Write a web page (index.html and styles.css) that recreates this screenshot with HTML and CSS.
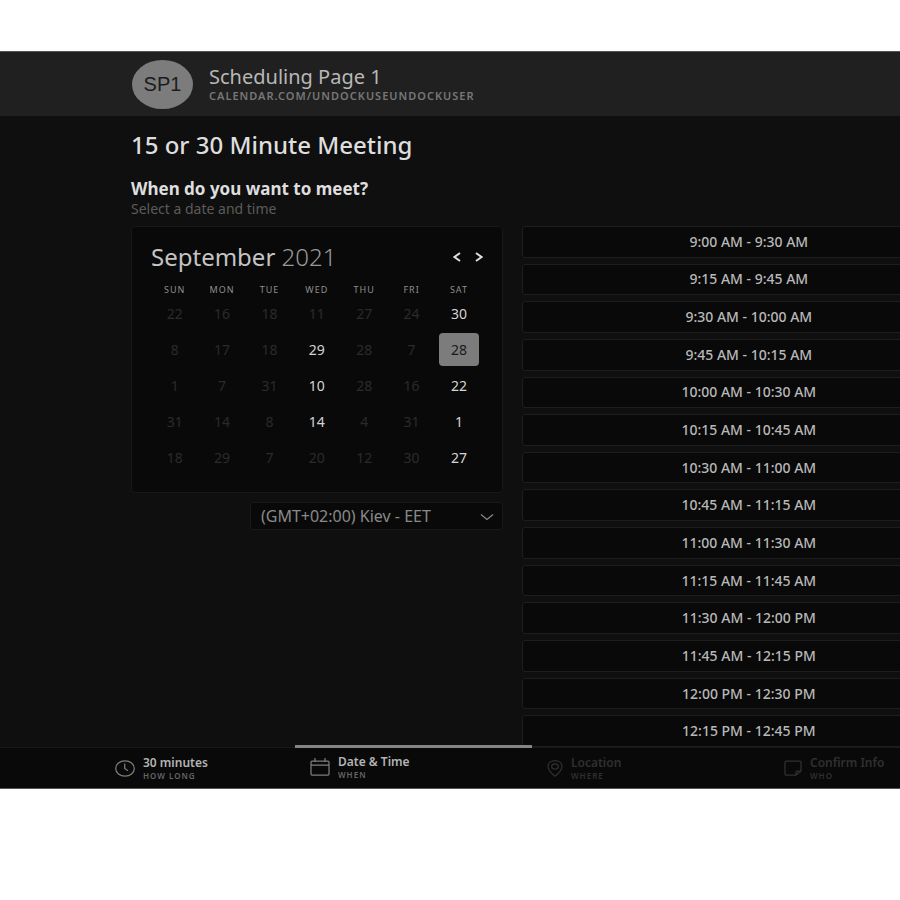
FILE: index.html
```
<!DOCTYPE html>
<html lang="en">
<head>
<meta charset="utf-8">
<title>Scheduling Page 1</title>
<link rel="stylesheet" href="styles.css">
</head>
<body>
<div class="app">
  <header class="header">
    <div class="avatar">SP1</div>
    <div>
      <div class="page-name">Scheduling Page 1</div>
      <div class="page-url">CALENDAR.COM/UNDOCKUSEUNDOCKUSER</div>
    </div>
  </header>
  <main class="main">
    <h1 class="title">15 or 30 Minute Meeting</h1>
    <h2 class="question">When do you want to meet?</h2>
    <p class="hint">Select a date and time</p>
    <div class="columns">
      <div class="left">
        <section class="calendar">
          <div class="month-row">
            <h3 class="month">September <span class="year">2021</span></h3>
            <button class="nav" aria-label="Previous month"><svg width="8" height="10" viewBox="0 0 8 10"><path d="M7 1 1.500 5 7 9"/></svg></button>
            <button class="nav" aria-label="Next month"><svg width="8" height="10" viewBox="0 0 8 10"><path d="M1 1 6.500 5 1 9"/></svg></button>
          </div>
          <table class="days">
            <thead><tr><th>SUN</th><th>MON</th><th>TUE</th><th>WED</th><th>THU</th><th>FRI</th><th>SAT</th></tr></thead>
            <tbody>
              <tr><td><button class="day" disabled>22</button></td><td><button class="day" disabled>16</button></td><td><button class="day" disabled>18</button></td><td><button class="day" disabled>11</button></td><td><button class="day" disabled>27</button></td><td><button class="day" disabled>24</button></td><td><button class="day">30</button></td></tr>
              <tr><td><button class="day" disabled>8</button></td><td><button class="day" disabled>17</button></td><td><button class="day" disabled>18</button></td><td><button class="day">29</button></td><td><button class="day" disabled>28</button></td><td><button class="day" disabled>7</button></td><td><button class="day selected">28</button></td></tr>
              <tr><td><button class="day" disabled>1</button></td><td><button class="day" disabled>7</button></td><td><button class="day" disabled>31</button></td><td><button class="day">10</button></td><td><button class="day" disabled>28</button></td><td><button class="day" disabled>16</button></td><td><button class="day">22</button></td></tr>
              <tr><td><button class="day" disabled>31</button></td><td><button class="day" disabled>14</button></td><td><button class="day" disabled>8</button></td><td><button class="day">14</button></td><td><button class="day" disabled>4</button></td><td><button class="day" disabled>31</button></td><td><button class="day">1</button></td></tr>
              <tr><td><button class="day" disabled>18</button></td><td><button class="day" disabled>29</button></td><td><button class="day" disabled>7</button></td><td><button class="day" disabled>20</button></td><td><button class="day" disabled>12</button></td><td><button class="day" disabled>30</button></td><td><button class="day">27</button></td></tr>
            </tbody>
          </table>
        </section>
        <div class="zone">
          <select class="zone-select" aria-label="Time zone"><option>(GMT+02:00) Kiev - EET</option></select>
          <svg class="zone-arrow" width="14" height="8" viewBox="0 0 14 8"><path d="M1 1.500 7 6.500 13 1.500"/></svg>
        </div>
      </div>
      <div class="slots">
        <button class="slot">9:00 AM - 9:30 AM</button>
        <button class="slot">9:15 AM - 9:45 AM</button>
        <button class="slot">9:30 AM - 10:00 AM</button>
        <button class="slot">9:45 AM - 10:15 AM</button>
        <button class="slot">10:00 AM - 10:30 AM</button>
        <button class="slot">10:15 AM - 10:45 AM</button>
        <button class="slot">10:30 AM - 11:00 AM</button>
        <button class="slot">10:45 AM - 11:15 AM</button>
        <button class="slot">11:00 AM - 11:30 AM</button>
        <button class="slot">11:15 AM - 11:45 AM</button>
        <button class="slot">11:30 AM - 12:00 PM</button>
        <button class="slot">11:45 AM - 12:15 PM</button>
        <button class="slot">12:00 PM - 12:30 PM</button>
        <button class="slot">12:15 PM - 12:45 PM</button>
      </div>
    </div>
  </main>
  <footer class="steps">
    <div class="step">
      <svg width="20" height="17" viewBox="0 0 20 17"><ellipse cx="10" cy="8.500" rx="9.300" ry="7.700"/><path d="M9.700 3.500V8.500L13 10.700"/></svg>
      <div><div class="step-name">30 minutes</div><div class="step-kind">HOW LONG</div></div>
    </div>
    <div class="step active">
      <svg width="20" height="18" viewBox="0 0 20 18"><path d="M2 3H18Q19 3 19 4V16Q19 17 18 17H2Q1 17 1 16V4Q1 3 2 3ZM1 7H19M5 0V4M15 0V4"/></svg>
      <div><div class="step-name">Date &amp; Time</div><div class="step-kind">WHEN</div></div>
    </div>
    <div class="step pending">
      <svg width="16" height="17" viewBox="0 0 16 17"><path d="M8 16.300Q1 10.500 1 6.500C1 3 4 .7 8 .7S15 3 15 6.500Q15 10.500 8 16.300Z"/><ellipse cx="8" cy="6.500" rx="3.300" ry="2.700"/></svg>
      <div><div class="step-name">Location</div><div class="step-kind">WHERE</div></div>
    </div>
    <div class="step pending">
      <svg width="18" height="16" viewBox="0 0 18 16"><path d="M2 1H16Q17 1 17 2V11L12 15H2Q1 15 1 14V2Q1 1 2 1ZM12 15V12Q12 11 13 11H17"/></svg>
      <div><div class="step-name">Confirm Info</div><div class="step-kind">WHO</div></div>
    </div>
  </footer>
</div>
</body>
</html>
```
FILE: styles.css
```
* { box-sizing: border-box; }
body {
  margin: 0;
  padding-top: 51px;
  background: #fff;
  color: #d6d6d6;
  font-family: "Noto Sans", "Open Sans", sans-serif;
}
h1, h2, h3, p { margin: 0; }
button, select { font: inherit; color: inherit; }
svg { fill: none; stroke: currentColor; stroke-width: 1.25; flex: none; }
.app {
  display: flex;
  flex-direction: column;
  min-height: 82vh;
  overflow: hidden;
  background: #0f0f0f;
  border-top: 1px solid #555;
  border-bottom: 1px solid #555;
}
.header {
  display: flex;
  align-items: center;
  gap: 16px;
  height: 64px;
  padding-left: 132px;
  background: #202020;
}
.avatar {
  display: flex;
  align-items: center;
  justify-content: center;
  width: 61px;
  height: 49px;
  border-radius: 50%;
  background: #7c7c7c;
  color: #1c1c1c;
  font: 20px "Liberation Sans", sans-serif;
}
.page-name { font-size: 20px; line-height: 22px; color: #b8b8b8; }
.page-url {
  font-size: 11px;
  line-height: 15px;
  font-weight: 600;
  letter-spacing: 1px;
  color: #777;
}
.main {
  flex: 1;
  display: flex;
  flex-direction: column;
  width: calc(100% + 76px);
  padding: 15px 0 0 131px;
}
.title { font-size: 24px; line-height: 28px; font-weight: 500; color: #dedede; }
.question { margin-top: 20px; font-size: 17px; line-height: 20px; font-weight: 700; color: #dedede; }
.hint { font-size: 14px; line-height: 20px; color: #5b5b5b; }
.columns {
  flex: 1;
  display: grid;
  grid-template-columns: 9fr 11fr;
  gap: 19px;
  margin-top: 7px;
}
.calendar {
  padding: 14px 19px 17px;
  background: #090909;
  border: 1px solid #181818;
  border-radius: 4px;
}
.month-row { display: flex; align-items: center; gap: 6px; height: 32px; margin-right: -4px; }
.month { flex: 1; font-size: 24px; line-height: 32px; font-weight: 400; color: #c4c4c4; }
.year { font-weight: 300; color: #999; }
.nav { width: 16px; height: 20px; padding: 0; border: 0; background: none; color: #ddd; }
.nav svg { display: block; margin: auto; stroke-width: 2; }
.days { width: 100%; table-layout: fixed; border-collapse: collapse; }
.days th {
  height: 22px;
  padding: 0;
  font-size: 9px;
  line-height: 10px;
  font-weight: 400;
  letter-spacing: 1px;
  vertical-align: bottom;
  color: #8e8e8e;
}
.days td { height: 36px; padding: 0; text-align: center; }
.day {
  width: 40px;
  height: 33px;
  padding: 0;
  border: 0;
  border-radius: 4px;
  background: none;
  font-size: 14px;
  font-weight: 400;
  color: #d4d4d4;
}
.day:disabled { color: #2b2b2b; }
.day.selected { background: #7c7c7c; color: #1a1a1a; }
.zone {
  position: relative;
  width: 68%;
  margin: 9px 0 0 auto;
}
.zone-select {
  display: block;
  width: 100%;
  height: 28px;
  padding: 0 10px;
  appearance: none;
  background: #090909;
  border: 1px solid #181818;
  border-radius: 3px;
  font-size: 16px;
  color: #8a8a8a;
}
.zone-arrow { position: absolute; right: 9px; top: 11px; color: #888; pointer-events: none; }
.slots { display: grid; grid-auto-rows: 1fr; gap: 6px; }
.slot {
  padding: 0;
  background: #090909;
  border: 1px solid #1d1d1d;
  border-radius: 3px;
  font-size: 14px;
  line-height: 18px;
  font-weight: 500;
  color: #b8b8b8;
}
.steps {
  display: grid;
  grid-template-columns: 195fr repeat(3, 237fr);
  width: calc(100% + 106px);
  height: 41px;
  padding-left: 100px;
  background: #090909;
  border-top: 1px solid #181818;
}
.step {
  position: relative;
  display: flex;
  align-items: center;
  gap: 8px;
  padding-left: 15px;
  color: #7d7d7d;
}
.step-name { font-size: 12px; line-height: 14px; font-weight: 600; color: #b4b4b4; }
.step-kind { font-size: 8px; line-height: 11px; font-weight: 600; letter-spacing: 1px; color: #666; }
.step.active { padding-bottom: 2px; }
.step.active::before {
  content: "";
  position: absolute;
  top: -3px;
  left: 0;
  right: 0;
  height: 3px;
  background: #858585;
}
.step.pending, .pending .step-name, .pending .step-kind { color: #303030; }
```
